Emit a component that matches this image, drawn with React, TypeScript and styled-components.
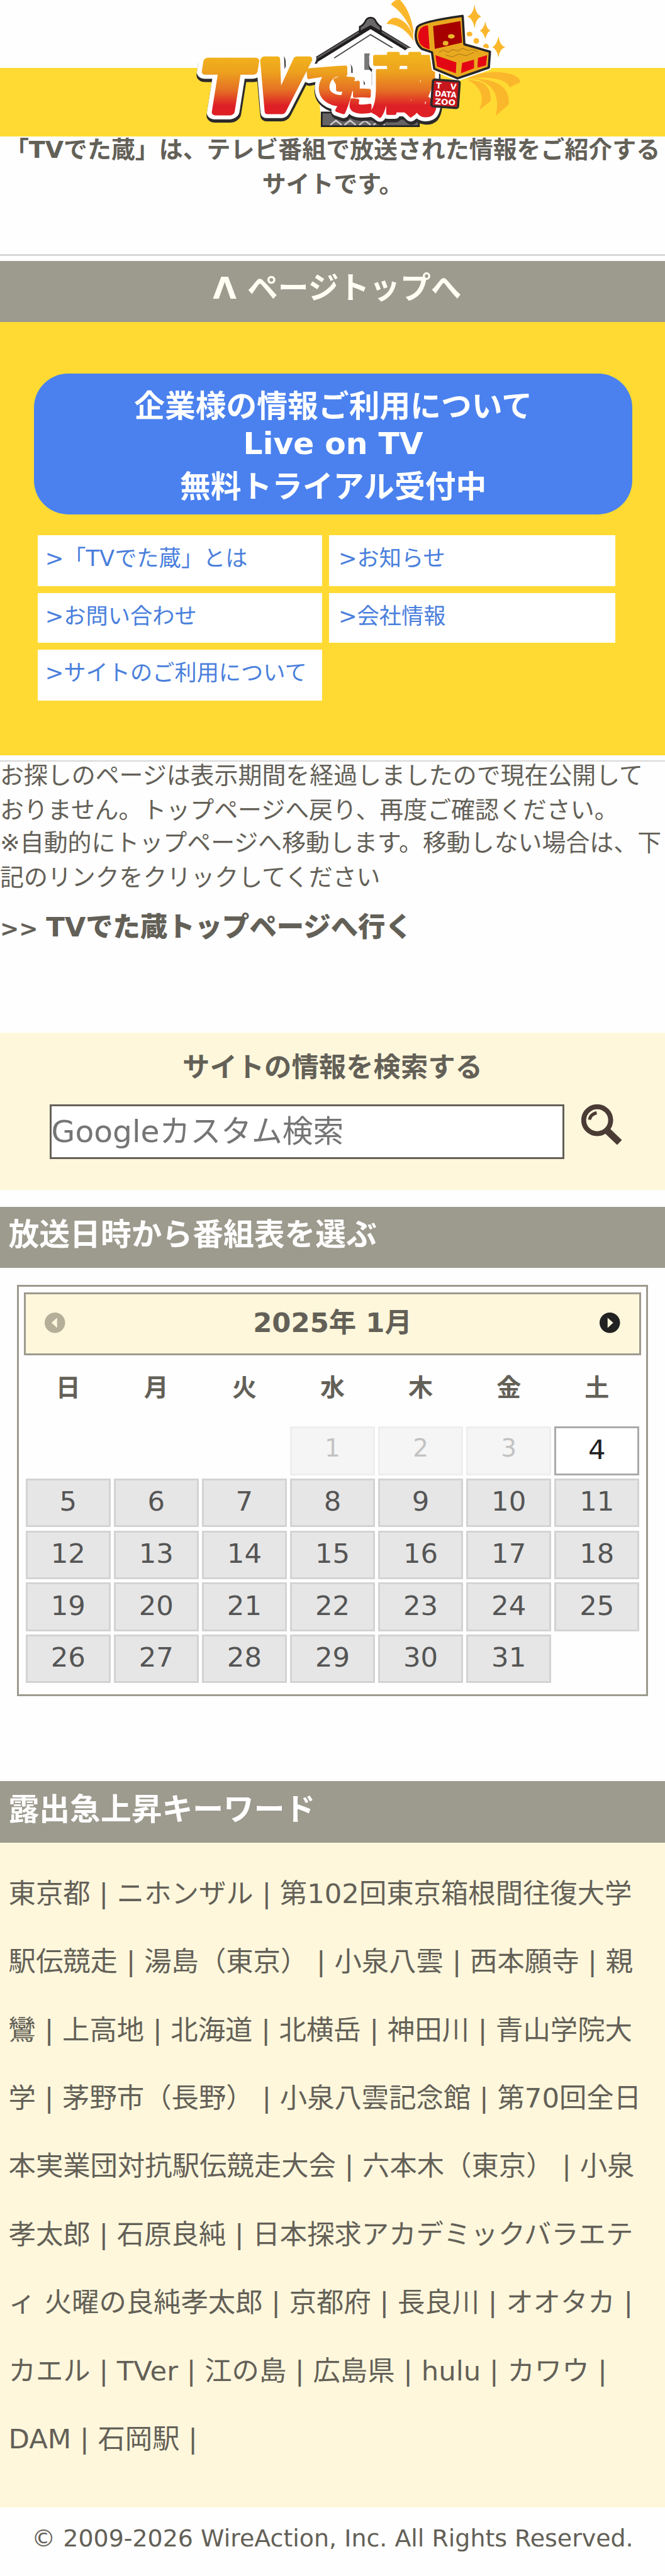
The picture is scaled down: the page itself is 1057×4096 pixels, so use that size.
import styled, { createGlobalStyle } from "styled-components";

const px = (n: number) => `${Math.round(n * 271.03) / 100}px`;

const colors = {
  text: "#636057",
  grey: "#9d9a8e",
  yellow: "#ffda33",
  cream: "#fef7dc",
  blue: "#4a81ee",
  line: "#d8d8d8",
};

const GlobalStyle = createGlobalStyle`
  * {
    box-sizing: border-box;
  }
  body {
    margin: 0;
    background: #fefefe;
    color: ${colors.text};
    font-family: "DejaVu Sans", "Noto Sans CJK JP", sans-serif;
    font-size: ${px(14)};
  }
  a {
    color: inherit;
    text-decoration: none;
  }
`;

const Page = styled.div`
  width: ${px(390)};
  height: 4096px;
  display: flex;
  flex-direction: column;
`;

const Header = styled.header`
  height: ${px(80)};
  flex-shrink: 0;
  background: linear-gradient(#fefefe 50%, ${colors.yellow} 50%);
  svg {
    display: block;
    width: 100%;
    height: 100%;
    overflow: visible;
  }
`;

const Tagline = styled.h1`
  height: ${px(69)};
  margin: 0;
  flex-shrink: 0;
  font-size: ${px(14)};
  line-height: ${px(20.3)};
  text-align: center;
  span {
    display: block;
    margin-top: ${px(-2.1)};
  }
`;

const Rule = styled.hr`
  width: 100%;
  height: ${px(1)};
  margin: 0;
  border: 0;
  flex-shrink: 0;
  background: ${colors.line};
`;

const PageTop = styled.a`
  display: flex;
  align-items: center;
  justify-content: center;
  height: ${px(36)};
  margin-top: ${px(3)};
  padding: 0 0 ${px(7)} ${px(5.5)};
  flex-shrink: 0;
  background: ${colors.grey};
  color: #fffff4 !important;
  font-size: ${px(18)};
  font-weight: bold;
`;

const Menu = styled.nav`
  height: ${px(254)};
  margin-bottom: ${px(3)};
  padding-top: ${px(30)};
  flex-shrink: 0;
  background: ${colors.yellow};
`;

const Banner = styled.a`
  display: block;
  width: 90%;
  height: ${px(83)};
  margin-left: ${px(19.9)};
  padding-top: ${px(4.7)};
  border-radius: ${px(20)};
  background: ${colors.blue};
  color: #fff !important;
  font-size: ${px(18)};
  font-weight: bold;
  text-align: center;
`;

const MenuGrid = styled.div`
  display: grid;
  grid-template-columns: ${px(167)} ${px(168)};
  grid-template-rows: ${px(30)} ${px(29)} ${px(30)};
  gap: ${px(4)};
  margin: ${px(12)} 0 0 ${px(22)};
`;

const MenuLink = styled.a`
  padding: ${px(3)} 0 0 ${px(4.5)};
  background: #fff;
  color: #4a7fdc !important;
  font-size: ${px(13)};
  white-space: nowrap;
  &:nth-child(even) {
    padding-left: ${px(5.5)};
  }
`;

const Notice = styled.section`
  height: ${px(159)};
  flex-shrink: 0;
  p {
    margin: 0;
    line-height: ${px(20.3)};
  }
  p:first-child {
    margin-top: ${px(-1.9)};
  }
  p + p {
    margin-top: ${px(-1.3)};
  }
`;

const TopLink = styled.a`
  display: block;
  margin-top: ${px(5.9)};
  font-size: ${px(13.33)};
  font-weight: bold;
  strong {
    font-size: ${px(16)};
  }
`;

const Search = styled.section`
  height: ${px(92)};
  padding-top: ${px(7.4)};
  flex-shrink: 0;
  background: ${colors.cream};
`;

const SearchTitle = styled.h2`
  height: ${px(34.6)};
  margin: 0;
  font-size: ${px(16)};
  text-align: center;
`;

const SearchRow = styled.form`
  display: flex;
  gap: ${px(10)};
  padding-left: ${px(29)};
  svg {
    width: ${px(24)};
    height: ${px(24)};
  }
`;

const SearchInput = styled.input`
  width: ${px(302)};
  height: ${px(32)};
  padding: 0;
  border: 3px solid ${colors.text};
  background: #fff;
  font: inherit;
  font-size: ${px(18)};
  &::placeholder {
    color: #757575;
  }
`;

const SectionTitle = styled.h2<{ $top: number }>`
  height: ${px(36)};
  margin: ${(p) => px(p.$top)} 0 0;
  padding: ${px(1.7)} ${px(5)} 0;
  flex-shrink: 0;
  background: ${colors.grey};
  color: #fff;
  font-size: ${px(18)};
`;

const Calendar = styled.section`
  width: ${px(370)};
  height: ${px(241)};
  margin: ${px(10)} ${px(10)} 0;
  padding: ${px(3)};
  flex-shrink: 0;
  border: 3px solid ${colors.grey};
`;

const CalendarHead = styled.div`
  display: flex;
  align-items: flex-start;
  justify-content: space-between;
  height: ${px(37)};
  padding: ${px(3.7)} ${px(11)} 0;
  border: 3px solid ${colors.grey};
  background: ${colors.cream};
  font-size: ${px(16)};
  font-weight: bold;
  svg {
    width: ${px(12)};
    height: ${px(12)};
    margin-top: ${px(7.2)};
  }
`;

const Weekdays = styled.div`
  display: grid;
  grid-template-columns: repeat(7, 1fr);
  height: ${px(41.9)};
  padding-top: ${px(7.3)};
  font-size: ${px(14.4)};
  font-weight: bold;
  text-align: center;
`;

const Days = styled.div`
  display: grid;
  grid-template-columns: repeat(7, 1fr);
  grid-auto-rows: ${px(28.5)};
  row-gap: ${px(2)};
`;

const Day = styled.span<{ $kind: "past" | "today" | "open" }>`
  margin: 0 ${px(1)};
  padding-top: ${px(3.1)};
  border: 3px solid ${(p) => (p.$kind === "today" ? "#aaa" : "#d3d3d3")};
  background: ${(p) => (p.$kind === "today" ? "#fff" : "#e6e6e6")};
  color: ${(p) => (p.$kind === "today" ? "#212121" : "#555")};
  font-size: ${(p) => px(p.$kind === "past" ? 14.4 : 16)};
  opacity: ${(p) => (p.$kind === "past" ? 0.35 : 1)};
  text-align: center;
`;

const Keywords = styled.p`
  height: ${px(390)};
  margin: 0;
  padding: ${px(10)} ${px(5)} 0;
  flex-shrink: 0;
  background: ${colors.cream};
  font-size: ${px(16)};
  line-height: ${px(40)};
`;

const Footer = styled.footer`
  display: flex;
  flex: 1;
  align-items: center;
  justify-content: center;
  padding-bottom: ${px(4)};
`;

const menu = [
  "「TVでた蔵」とは",
  "お知らせ",
  "お問い合わせ",
  "会社情報",
  "サイトのご利用について",
];

const keywords = [
  "東京都",
  "ニホンザル",
  "第102回東京箱根間往復大学駅伝競走",
  "湯島（東京）",
  "小泉八雲",
  "西本願寺",
  "親鸞",
  "上高地",
  "北海道",
  "北横岳",
  "神田川",
  "青山学院大学",
  "茅野市（長野）",
  "小泉八雲記念館",
  "第70回全日本実業団対抗駅伝競走大会",
  "六本木（東京）",
  "小泉孝太郎",
  "石原良純",
  "日本探求アカデミックバラエティ 火曜の良純孝太郎",
  "京都府",
  "長良川",
  "オオタカ",
  "カエル",
  "TVer",
  "江の島",
  "広島県",
  "hulu",
  "カワウ",
  "DAM",
  "石岡駅",
];

const TODAY = 4;

const dayKind = (day: number) => {
  if (day < TODAY) return "past";
  return day === TODAY ? "today" : "open";
};

// `grow` widens the outline, for the white rim and the shadow behind it
const Lettering = ({ grow = 0 }: { grow?: number }) => (
  <>
    <g strokeWidth={12 + grow}>
      <text
        transform="translate(124 0) skewX(-9) scale(1.2 1)"
        y="197"
        fontSize="120"
      >
        T
      </text>
      <text transform="translate(226 0) skewX(-12)" y="195" fontSize="120">
        V
      </text>
    </g>
    <g strokeWidth={6 + grow}>
      <text x="277" y="179" fontSize="80">
        で
      </text>
      <text x="322" y="194" fontSize="68">
        た
      </text>
      <text x="411" y="193" fontSize="114">
        蔵
      </text>
    </g>
  </>
);

const Logo = () => (
  <svg viewBox="0 0 1170 240" role="img" aria-label="TVでた蔵">
    <defs>
      <linearGradient
        id="fire"
        gradientUnits="userSpaceOnUse"
        x1="0"
        y1="95"
        x2="0"
        y2="205"
      >
        <stop offset="0" stopColor="#f2b41c" />
        <stop offset="0.28" stopColor="#eda31e" />
        <stop offset="0.58" stopColor="#e57024" />
        <stop offset="0.83" stopColor="#de1f26" />
        <stop offset="1" stopColor="#de1f26" />
      </linearGradient>
    </defs>
    <g transform="translate(300 0)">
      {/* storehouse */}
      <path d="M258 112 351 50 437 104V221H265z" fill="#fefefe" />
      <path d="M266 198H437V222H266z" fill="#656364" stroke="#222" strokeWidth="3" />
      <path
        d="M281 220l10-8 10 8M306 220l10-8 10 8M332 220l10-8 10 8M357 220l10-8 10 8"
        fill="none"
        stroke="#ccc"
        strokeWidth="2.5"
      />
      <path d="M250 109 352 46 424 90" fill="none" stroke="#1f1d1e" strokeWidth="9" />
      <path d="M250 107 352 44 424 88" fill="none" stroke="#5d5b5c" strokeWidth="3" />
      <path
        d="M333 56V47Q338 45 342 39Q345 31 352 31Q359 31 362 39Q366 45 370 47V56L352 46z"
        fill="#6a6869"
        stroke="#1f1d1e"
        strokeWidth="3"
      />
      <path d="M288 102 352 61 400 90" fill="none" stroke="#444" strokeWidth="2" />
      <path d="M341 94H356V123H341z" fill="#777" />
      {/* lettering: shadow, white rim, colour */}
      <g
        fontFamily='"Noto Sans CJK JP", sans-serif'
        fontWeight="900"
        strokeLinejoin="round"
        textAnchor="middle"
      >
        <g transform="translate(1 4)" fill="#2c2a2b" stroke="#2c2a2b">
          <Lettering grow={17} />
        </g>
        <g fill="#fff" stroke="#fff">
          <Lettering grow={14} />
        </g>
        <g fill="url(#fire)" stroke="url(#fire)">
          <Lettering />
        </g>
      </g>
      {/* streamers */}
      <g fill="#fbb72c">
        <path d="M388 8Q394-2 404 0Q426 22 430 75Q420 30 388 8z" />
        <path d="M380 42Q390 26 404 34Q424 44 430 76Q410 42 380 42z" />
        <path d="M520 138Q560 120 601 131Q617 138 615 145L597 154Q588 132 520 138z" />
        <path d="M520 138Q600 136 595 184L572 204Q584 154 540 140z" />
        <path d="M530 141Q566 144 563 178L543 194Q558 158 522 140z" />
        <path d="M535 8Q537 26 547 29Q537 32 535 50Q532 32 522 29Q532 26 535 8z" />
        <path d="M554 38Q556 51 563 54Q556 57 554 69Q551 57 544 54Q551 51 554 38z" />
        <path d="M577 64Q579 80 589 83Q579 86 577 101Q574 86 566 83Q574 80 577 64z" />
        <ellipse cx="526" cy="60" rx="5" ry="4" />
        <circle cx="538" cy="72" r="5" />
        <circle cx="555" cy="82" r="5" />
      </g>
      {/* treasure chest */}
      <g strokeLinejoin="round">
        <path
          d="M434 48Q440 38 514 28L517 78 562 91 560 119 505 138 464 121 460 92 442 86Q426 72 434 48z"
          fill="#fff"
          stroke="#fff"
          strokeWidth="9"
        />
        <path
          d="M434 48Q440 38 514 28L517 78 562 91 560 119 505 138 464 121 460 92 442 86Q426 72 434 48z"
          fill="#e9a91f"
          stroke="#262425"
          strokeWidth="4"
        />
      </g>
      <path d="M440 50Q448 44 453 45L456 87Q444 84 439 77Q432 62 440 50z" fill="#e30614" />
      <path d="M462 46 510 37 513 75 465 86z" fill="#a60000" />
      <path
        d="M466 97 503 110 502 129 469 117zM513 111 534 105V120L511 129zM541 102 557 97 555 115 540 119z"
        fill="#e30614"
      />
      <path
        d="M472 92l8-4 8 4 9-5 8 3 9-5 9 4 9-2 8 4M484 97l12 3 12-5 12 3 14-6"
        fill="none"
        stroke="#b9851c"
        strokeWidth="1.5"
      />
      <ellipse cx="494" cy="64" rx="6" ry="4" fill="#e9b62a" />
      <ellipse cx="484" cy="76" rx="5" ry="4" fill="#e9b62a" />
      {/* seal */}
      <g transform="translate(462 140) rotate(4)">
        <rect width="47" height="47" rx="3" fill="#c8161d" stroke="#2c2a2b" strokeWidth="4" />
        <g
          fill="#fff"
          fontFamily='"DejaVu Sans", sans-serif'
          fontSize="14"
          fontWeight="bold"
          textAnchor="middle"
        >
          <text x="24" y="15" textLength="36">
            T V
          </text>
          <text x="24" y="29" textLength="38" lengthAdjust="spacingAndGlyphs">
            DATA
          </text>
          <text x="24" y="43" textLength="36" lengthAdjust="spacingAndGlyphs">
            ZOO
          </text>
        </g>
      </g>
    </g>
  </svg>
);

const SearchIcon = () => (
  <svg viewBox="0 0 24 24" fill="none" stroke="#4b3b35">
    <circle cx="9.3" cy="9.3" r="7.9" strokeWidth="2.9" />
    <path d="M15.2 15.5 22.4 22.4" strokeWidth="4" />
    <path d="M4.8 9Q5.2 6 9 4.9" strokeWidth="1.9" />
  </svg>
);

const ArrowIcon = ({ next = false }: { next?: boolean }) => (
  <svg viewBox="0 0 12 12">
    <circle cx="6" cy="6" r="6" fill={next ? "#222" : "#b5af99"} />
    <path d={next ? "M4.7 3 8 6 4.7 9z" : "M7.3 3 4 6 7.3 9z"} fill={colors.cream} />
  </svg>
);

const App = () => (
  <Page>
    <GlobalStyle />
    <Header>
      <Logo />
    </Header>
    <Tagline>
      <span>「TVでた蔵」は、テレビ番組で放送された情報をご紹介するサイトです。</span>
    </Tagline>
    <Rule />
    <PageTop href="#">Λ ページトップへ</PageTop>
    <Menu>
      <Banner href="#">
        企業様の情報ご利用について
        <br />
        Live on TV
        <br />
        無料トライアル受付中
      </Banner>
      <MenuGrid>
        {menu.map((label) => (
          <MenuLink key={label} href="#">
            &gt;{label}
          </MenuLink>
        ))}
      </MenuGrid>
    </Menu>
    <Rule />
    <Notice>
      <p>
        お探しのページは表示期間を経過しましたので現在公開しておりません。トップページへ戻り、再度ご確認ください。
      </p>
      <p>
        ※自動的にトップページへ移動します。移動しない場合は、下記のリンクをクリックしてください
      </p>
      <TopLink href="#">
        &gt;&gt; <strong>TVでた蔵トップページへ行く</strong>
      </TopLink>
    </Notice>
    <Search>
      <SearchTitle>サイトの情報を検索する</SearchTitle>
      <SearchRow>
        <SearchInput placeholder="Googleカスタム検索" />
        <SearchIcon />
      </SearchRow>
    </Search>
    <SectionTitle $top={10}>放送日時から番組表を選ぶ</SectionTitle>
    <Calendar>
      <CalendarHead>
        <ArrowIcon />
        <span>2025年 1月</span>
        <ArrowIcon next />
      </CalendarHead>
      <Weekdays>
        {[..."日月火水木金土"].map((name) => (
          <span key={name}>{name}</span>
        ))}
      </Weekdays>
      <Days>
        <i />
        <i />
        <i />
        {Array.from({ length: 31 }, (_, i) => i + 1).map((day) => (
          <Day key={day} $kind={dayKind(day)}>
            {day}
          </Day>
        ))}
      </Days>
    </Calendar>
    <SectionTitle $top={50}>露出急上昇キーワード</SectionTitle>
    <Keywords>{keywords.map((word) => `${word} | `).join("")}</Keywords>
    <Footer>© 2009-2026 WireAction, Inc. All Rights Reserved.</Footer>
  </Page>
);

export default App;
